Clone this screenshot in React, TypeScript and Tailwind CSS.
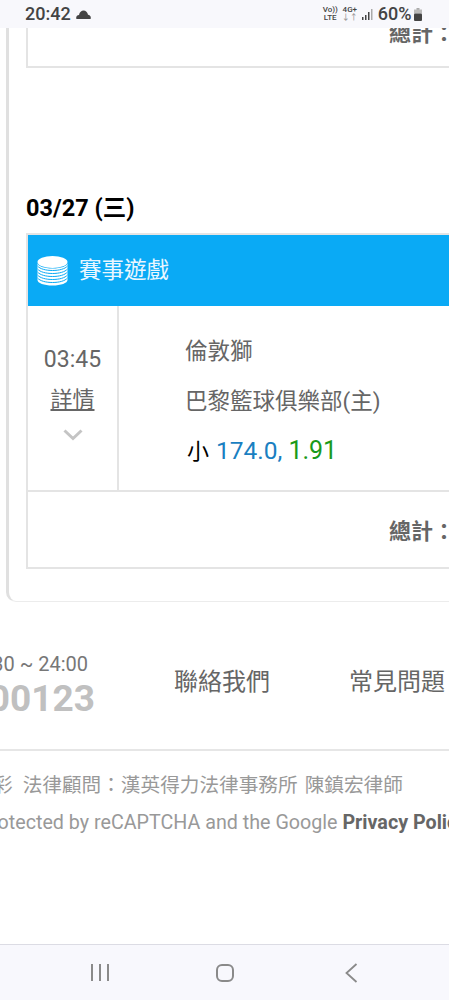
function CoinsIcon() {
  return (
    <svg width="31" height="31" viewBox="0 0 31 31" className="shrink-0">
      <ellipse cx="15.5" cy="7" rx="15" ry="6" fill="#fff" />
      <path d="M0.5 8 V25 C0.5 28 7 30.5 15.5 30.5 C24 30.5 30.5 28 30.5 25 V8 C30.5 11 24 13.5 15.5 13.5 C7 13.5 0.5 11 0.5 8 Z" fill="#fff" />
      {[14, 17, 20, 23, 26].map((y) => (
        <path key={y} d={`M0.5 ${y - 3} C3 ${y} 9 ${y + 1.5} 15.5 ${y + 1.5} C22 ${y + 1.5} 28 ${y} 30.5 ${y - 3}`} fill="none" stroke="#0aaaf5" strokeWidth="1" />
      ))}
    </svg>
  );
}

function StatusBar() {
  return (
    <div className="h-[28px] shrink-0 bg-[#f8f8fc] flex items-center pl-[25px] text-[#444] relative z-10">
      <span className="text-[18px] font-medium leading-none">20:42</span>
      <svg width="15" height="9" viewBox="0 0 15 9" className="ml-[5px]">
        <path d="M0.5 9 C-0.5 7 1 5 3 5 C3.5 2.2 5.5 0.5 7.5 0.5 C9.8 0.5 11.5 2.2 12 4.8 C14 5 15.5 7 14.5 9 Z" fill="#444" />
      </svg>
      <div className="ml-[232px] flex flex-col items-center text-[8px] leading-[8px] font-medium">
        <span>Vo))</span>
        <span>LTE</span>
      </div>
      <div className="ml-[4px] flex flex-col items-center text-[8px] leading-[8px] font-medium">
        <span>4G+</span>
        <span className="text-[#999]">↓↑</span>
      </div>
      <svg width="11" height="11" viewBox="0 0 11 11" className="ml-[4px]">
        <rect x="0" y="8" width="1.5" height="3" fill="#444" />
        <rect x="3" y="6" width="1.5" height="5" fill="#444" />
        <rect x="6" y="3" width="1.5" height="8" fill="#444" />
        <rect x="9" y="0" width="1.5" height="11" fill="#aaa" />
      </svg>
      <span className="ml-[5px] text-[18px] font-medium leading-none">60%</span>
      <svg width="8" height="13" viewBox="0 0 8 13" className="ml-[2px]">
        <rect x="2.5" y="0" width="3" height="2" fill="#aaa" />
        <rect x="0" y="1.5" width="8" height="4" fill="#bbb" />
        <rect x="0" y="5.5" width="8" height="7.5" rx="1" fill="#444" />
      </svg>
    </div>
  );
}

function NavBar() {
  return (
    <div className="h-[56px] shrink-0 bg-[#f8f8fd] border-t border-[#dcdce4] flex items-center">
      <div className="ml-[91px] flex gap-[6px]">
        <div className="w-[2px] h-[17px] bg-[#8a8a8a]" />
        <div className="w-[2px] h-[17px] bg-[#8a8a8a]" />
        <div className="w-[2px] h-[17px] bg-[#8a8a8a]" />
      </div>
      <div className="ml-[107px] w-[18px] h-[18px] border-2 border-[#8a8a8a] rounded-[6px]" />
      <svg width="13" height="20" viewBox="0 0 13 20" className="ml-[111px]">
        <path d="M11.5 1 L1.5 10 L11.5 19" fill="none" stroke="#8a8a8a" strokeWidth="1.8" />
      </svg>
    </div>
  );
}

export default function App() {
  return (
    <div
      className="w-[449px] h-[1000px] overflow-hidden flex flex-col bg-white"
      style={{ fontFamily: 'Roboto, "Noto Sans CJK TC", sans-serif' }}
    >
      <StatusBar />
      <div className="flex-1 overflow-hidden min-h-0">
        <div className="ml-[6px] w-[600px] h-[574px] border-l-[3px] border-b border-l-[#e0e0e0] border-b-[#ececec] rounded-bl-[10px] pl-[17px]">
          <div className="h-[40px] border-l-2 border-b-2 border-[#e4e4e4] overflow-hidden">
            <div className="-mt-[9px] pl-[361px] text-[22px] leading-[30px] font-bold text-[#666] whitespace-nowrap">總計：</div>
          </div>
          <h2 className="mt-[124px] text-[23.5px] leading-[32px] font-bold text-black whitespace-nowrap">03/27 (三)</h2>
          <div className="mt-[9px] h-[336px] border-2 border-[#e4e4e4] flex flex-col">
            <div className="h-[71px] shrink-0 bg-[#0aaaf5] flex items-center pl-[9px] gap-[11px]">
              <CoinsIcon />
              <span className="text-[22.5px] text-[#eaf7ff] leading-none">賽事遊戲</span>
            </div>
            <div className="h-[186px] shrink-0 border-b-2 border-[#e4e4e4] flex">
              <div className="w-[91px] shrink-0 border-r-2 border-[#e4e4e4] flex flex-col items-center pt-[38px] text-[#666]">
                <span className="text-[23px] leading-[32px]">03:45</span>
                <a className="mt-[9px] text-[22px] leading-[30px] underline underline-offset-2">詳情</a>
                <svg width="20" height="12" viewBox="0 0 20 12" className="mt-[14px]">
                  <path d="M1.5 1.5 L10 9.5 L18.5 1.5" fill="none" stroke="#c4c4c4" strokeWidth="3" />
                </svg>
              </div>
              <div className="flex-1 pl-[66px] pt-[29px] whitespace-nowrap text-[22.5px] text-[#666]">
                <div className="leading-[32px]">倫敦獅</div>
                <div className="mt-[18px] leading-[32px]">巴黎籃球俱樂部(主)</div>
                <div className="mt-[18px] leading-[32px] pl-[2px] flex items-baseline">
                  <span className="text-black text-[22px]">小</span>
                  <span className="ml-[7px] text-[#1a7fc1] text-[24.5px]">174.0,</span>
                  <span className="ml-[6px] text-[#1a9a1a] text-[25px]">1.91</span>
                </div>
              </div>
            </div>
            <div className="flex-1 flex items-center pl-[361px] pt-[3px] text-[22px] font-bold text-[#666] whitespace-nowrap">總計：</div>
          </div>
        </div>

        <div className="mt-[48px] h-[101px] border-b-2 border-[#e6e6e6] flex items-start">
          <div className="w-[95px] shrink-0 flex flex-col items-end overflow-hidden whitespace-nowrap">
            <span className="text-[20px] leading-[28px] text-[#777] pr-[7px]">08:30 ~ 24:00</span>
            <span className="text-[37px] leading-[42px] font-bold text-[#c0c0c0]">000123</span>
          </div>
          <a className="ml-[79px] mt-[16px] text-[24px] leading-[32px] text-[#666] whitespace-nowrap">聯絡我們</a>
          <a className="ml-[79px] mt-[16px] text-[24px] leading-[32px] text-[#666] whitespace-nowrap">常見問題</a>
        </div>

        <div className="mt-[21px] -ml-[7px] w-[700px] whitespace-nowrap text-[#999]">
          <div className="text-[19.65px] leading-[28px] flex">
            <span>彩</span>
            <span className="ml-[10px]">法律顧問：漢英得力法律事務所</span>
            <span className="ml-[7px]">陳鎮宏律師</span>
          </div>
          <div className="mt-[9px] text-[19.7px] leading-[28px] -ml-[13px]">
            protected by reCAPTCHA and the Google <b className="text-[#666] font-bold">Privacy Policy</b>
          </div>
        </div>
      </div>
      <NavBar />
    </div>
  );
}
